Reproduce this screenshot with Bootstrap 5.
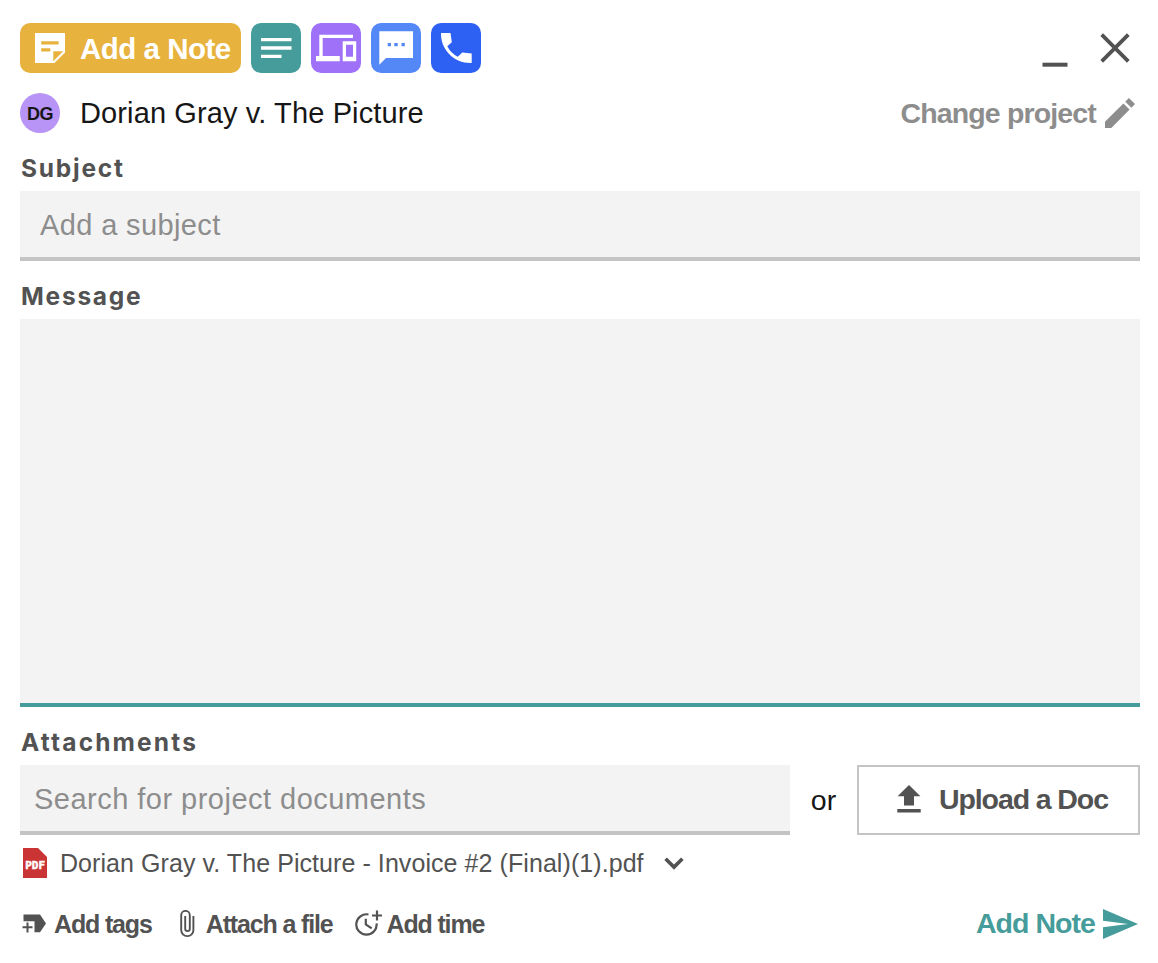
<!DOCTYPE html>
<html lang="en">
<head>
<meta charset="utf-8">
<title>Add a Note</title>
<link href="https://cdn.jsdelivr.net/npm/bootstrap@5.3.0/dist/css/bootstrap.min.css" rel="stylesheet">
<style>
body{font-family:"Liberation Sans",Arial,sans-serif;color:#161616;background:#fff;line-height:1}
.note-panel{width:1158px;height:963px;padding:23px 18px 0 20px;overflow:hidden}
svg{display:block;flex:none}
.btn{--bs-btn-line-height:1;--bs-btn-border-width:0;--bs-btn-padding-x:0;--bs-btn-padding-y:0;white-space:nowrap;font-weight:700}
.tool-strip{gap:10px}
.tool{height:50px;width:50px;border-radius:10px;color:#fff!important}
.tool-text{background:#459c9a!important}
.tool-devices{background:#9f70f8!important}
.tool-chat{background:#5588f7!important}
.tool-call{background:#2d61f3!important}
.tool-note{width:221px;background:#e7b23e!important;font-size:29.5px;letter-spacing:-.5px}
.tool-note svg{margin:0 15px 0 15px}
.tool-note span{padding-top:2px}
.project{height:40px;margin-top:20px}
.avatar{width:40px;height:40px;background:#b794f6;font-size:18px;font-weight:700;letter-spacing:-.5px;margin-right:20px;padding-top:1px}
.project-name{font-size:29px;letter-spacing:.12px}
.change{font-size:28.5px;letter-spacing:-.85px;color:#8d8d8d!important}
.form-label{display:block;height:58px;margin:0;padding:23px 0 0 1px;font:700 24.5px/24px Inter,sans-serif;letter-spacing:1.75px;color:#525252}
.label-wide{letter-spacing:2.15px}
.form-control,.form-control:focus{background:#f3f3f3;border:0;border-bottom:4px solid #c4c4c4;border-radius:0;height:70px;padding:3px 20px 0;font-size:29px;letter-spacing:.38px;box-shadow:none;resize:none}
.form-control::placeholder{color:#8d8d8d;opacity:1}
.form-control.message{height:388px;border-color:#459c9a}
.form-control.search{width:770px;padding:3px 14px 0;letter-spacing:.48px}
.upload{width:283px;height:70px;border:2px solid #c4c4c4!important;border-radius:0;color:#525252!important;font-size:28.5px;letter-spacing:-1.1px}
.upload span,.send span{padding-bottom:2px}
.or{width:67px;font-size:28.5px}
.file-row{height:30px;margin-top:13px;font-size:25px;letter-spacing:.07px;color:#525252}
.file-row span{padding-top:1px}
.actions{height:30px;margin-top:31px}
.act{color:#525252!important;font-size:25px;letter-spacing:-1.15px}
.send{color:#459c9a!important;font-size:28.5px;letter-spacing:-.95px}
</style>
</head>
<body>
<main class="note-panel">
  <header class="d-flex align-items-center">
    <div class="tool-strip d-flex">
      <button class="btn tool tool-note d-flex align-items-center">
        <svg width="30" height="30" viewBox="0 0 30 30"><path fill="#fff" d="M0 0H30V19.5L19.5 30H0Z"/><path fill="none" stroke="#e7b23e" stroke-width="3.2" d="M6.2 9.8H23.6M6.2 16.9H15.3"/><path fill="#e7b23e" d="M18.3 18.3H28.2L18.3 28.2Z"/></svg><span>Add a Note</span>
      </button>
      <button class="btn tool tool-text" aria-label="Text"><svg width="50" height="50" viewBox="0 0 50 50" stroke="#fff" stroke-width="3.3"><path d="M10 16.7H40.5M10 25H40.5M10 33.3H30.5"/></svg></button>
      <button class="btn tool tool-devices" aria-label="Devices"><svg width="50" height="50" viewBox="0 0 50 50" fill="#fff"><path d="M8.3 11.7H42V15H11.7V33H28.8V38.3H5V33H8.3Z"/><path fill-rule="evenodd" d="M31.7 18.3H45.2V38.3H31.7ZM35 21.7V33.7H42V21.7Z"/></svg></button>
      <button class="btn tool tool-chat" aria-label="Chat"><svg width="50" height="50" viewBox="0 0 50 50"><path fill="#fff" d="M8.3 8.3H42V35H15L8.3 41.7Z"/><path fill="#5588f7" d="M16.7 20H20V23.3H16.7ZM23.3 20H26.7V23.3H23.3ZM30.5 20H33.8V23.3H30.5Z"/></svg></button>
      <button class="btn tool tool-call" aria-label="Call"><svg width="50" height="50" viewBox="0 0 50 50"><path fill="#fff" d="M10 10H19.5L20.8 19.2L16.3 23.2Q19.8 30.2 26.8 33.7L31.3 29.6L40.7 30.6V40C23.5 40.6 9.5 27 10 10Z"/></svg></button>
    </div>
    <svg class="ms-auto" width="26" height="50" viewBox="0 0 26 50"><path d="M.5 41.7H25.5" stroke="#525252" stroke-width="4"/></svg>
    <svg style="margin:0 10px 0 32px" width="30" height="50" viewBox="0 0 30 50"><path d="M1.7 11.7L28.3 38.3M28.3 11.7L1.7 38.3" stroke="#525252" stroke-width="3.8"/></svg>
  </header>

  <section class="project d-flex align-items-center">
    <span class="avatar rounded-circle d-flex align-items-center justify-content-center">DG</span>
    <span class="project-name">Dorian Gray v. The Picture</span>
    <button class="btn change ms-auto d-flex align-items-center"><span>Change project</span><svg style="margin:0 5px 0 9px" width="30" height="30" viewBox="0 0 30 30" fill="currentColor"><path d="M0 30V23.8L18.4 5.4L24.6 11.6L6.3 30ZM20.2 3.7L23.9 0L30 6.1L26.4 9.8Z"/></svg></button>
  </section>

  <label class="form-label" for="subject">Subject</label>
  <input id="subject" class="form-control" placeholder="Add a subject">
  <label class="form-label" for="message">Message</label>
  <textarea id="message" class="form-control message"></textarea>
  <label class="form-label label-wide" for="docs">Attachments</label>
  <div class="d-flex align-items-center">
    <input id="docs" class="form-control search" placeholder="Search for project documents">
    <span class="or text-center">or</span>
    <button class="btn upload d-flex align-items-center"><svg style="margin:0 18px 0 38px" width="24" height="30" viewBox="0 0 24 30" fill="currentColor"><path d="M12 0L23.4 11.3H17V20.5H7V11.3H.6ZM.3 24H23.7V27.5H.3Z"/></svg><span>Upload a Doc</span></button>
  </div>

  <div class="file-row d-flex align-items-center">
    <svg style="margin:0 13px 0 3px" width="24" height="30" viewBox="0 0 24 30"><path fill="#cb3434" d="M0 0H15L24 9V30H0Z"/><text x="2.2" y="21.2" textLength="19.8" lengthAdjust="spacingAndGlyphs" fill="#fff" stroke="#fff" stroke-width=".5" font-family="DejaVu Sans Mono" font-weight="700" font-size="10.5" letter-spacing="0">PDF</text></svg>
    <span>Dorian Gray v. The Picture - Invoice #2 (Final)(1).pdf</span>
    <svg style="margin-left:20px" width="20" height="14" viewBox="0 0 20 14"><path d="M1.6 2.8L10 11.1L18.4 2.8" fill="none" stroke="#525252" stroke-width="3.6"/></svg>
  </div>

  <footer class="actions d-flex align-items-center">
    <button class="btn act d-flex align-items-center"><svg style="margin:0 8px 0 2px" width="24" height="20" viewBox="0 0 24 20"><path fill="currentColor" d="M1.5 .5H18L24 9.5L18 18.2H12.5V7.3H1.5Z"/><path fill="none" stroke="currentColor" stroke-width="2" d="M.5 13.2H10.5M5.5 8.5V18.5"/></svg><span>Add tags</span></button>
    <button class="btn act d-flex align-items-center"><svg style="margin:0 11px 0 28px" width="15" height="28" viewBox="0 0 15 28" fill="none" stroke="currentColor" stroke-width="1.9"><path d="M13.4 6V20A6.1 6.1 0 0 1 1.2 20V5.2A4.3 4.3 0 0 1 9.8 5.2V18.8A2.3 2.3 0 0 1 5.2 18.8V6"/></svg><span>Attach a file</span></button>
    <button class="btn act d-flex align-items-center"><svg style="margin:0 5px 0 22px" width="27" height="28" viewBox="0 0 27 28" fill="none" stroke="currentColor" stroke-width="2.2"><path d="M13.5 4.5A10.2 10.2 0 1 0 21.6 13.4M10.8 8.7V14.5L16.7 18.3M17 5.5H27M22 .5V10.5"/></svg><span>Add time</span></button>
    <button class="btn send ms-auto d-flex align-items-center"><span>Add Note</span><svg style="margin:0 2px 0 8px" width="35" height="30" viewBox="0 0 35 30"><path fill="currentColor" d="M0 0L35 15L0 30V18.2L25 15L0 11.8Z"/></svg></button>
  </footer>
</main>
<script src="https://cdn.jsdelivr.net/npm/bootstrap@5.3.0/dist/js/bootstrap.bundle.min.js"></script>
</body>
</html>
